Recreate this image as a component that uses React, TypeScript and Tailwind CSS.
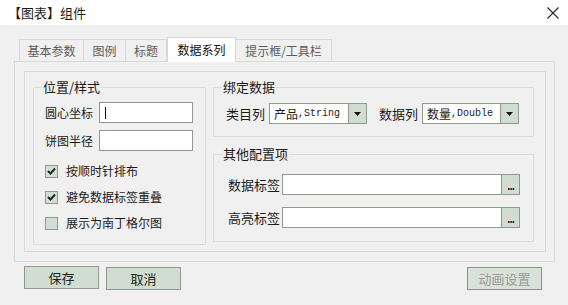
import React from "react";

const cjk = "font-['Noto_Sans_CJK_SC','Noto_Sans',sans-serif]";
const mono = "font-['Liberation_Mono','Noto_Sans_CJK_SC',monospace]";

const tabs = [
  { name: "基本参数", w: "w-[65px]" },
  { name: "图例", w: "w-[42px]" },
  { name: "标题", w: "w-[41px]" },
  { name: "数据系列", w: "w-[69px]", active: true },
  { name: "提示框/工具栏", w: "w-[96px]" },
];

const CheckRow = ({ label, checked }: { label: string; checked: boolean }) => (
  <div className="flex items-center h-[26px]">
    <span className="w-[13px] h-[13px] border border-[#8d9a8d] bg-[#d3ddd3] flex items-center justify-center">
      {checked && (
        <svg width="9" height="8" viewBox="0 0 9 8">
          <path d="M1 4 L3.5 6.5 L8 1.5" stroke="#1e2a1e" strokeWidth="2" fill="none" />
        </svg>
      )}
    </span>
    <span className="ml-[8px] text-[12px] text-[#1a1a1a]">{label}</span>
  </div>
);

// fieldset + legend gives the title sitting on the border, like a Win32 group box
const GroupBox = ({ title, className, inner, children }: { title: string; className: string; inner: string; children: React.ReactNode }) => (
  <fieldset className={`border border-[#dcdcdc] ${className}`}>
    <legend className="ml-[8px] px-[1px] text-[13px] leading-[16px] text-[#1a1a1a]">{title}</legend>
    <div className={inner}>{children}</div>
  </fieldset>
);

const Combo = ({ cn, en, w }: { cn: string; en: string; w: string }) => (
  <div className={`flex h-[21px] border border-[#8d9a8d] bg-white ${w}`}>
    <div className="flex-1 flex items-center pl-[4px] whitespace-nowrap">
      <span className="text-[12px]">{cn}</span>
      <span className={`${mono} text-[10px] text-[#222]`}>,{en}</span>
    </div>
    <div className="w-[18px] border-l border-[#8d9a8d] bg-[#cfdccf] flex items-center justify-center">
      <svg width="7" height="4" viewBox="0 0 7 4">
        <path d="M0 0 H7 L3.5 4 Z" fill="#111" />
      </svg>
    </div>
  </div>
);

const EllipsisInput = () => (
  <div className="flex h-[21px] w-[238px] border border-[#8d9a8d] bg-white">
    <div className="flex-1" />
    <div className="w-[18px] border-l border-[#8d9a8d] bg-[#cfdccf] flex items-end justify-center pb-[5px]">
      <span className="text-[10px] leading-[6px] font-bold tracking-[-1px] text-[#222]">...</span>
    </div>
  </div>
);

const Btn = ({ label, disabled }: { label: string; disabled?: boolean }) => (
  <button
    className={`w-[75px] h-[23px] border text-[13px] ${
      disabled ? "border-[#8a948a] bg-[#d9e2d9] text-[#9a9a9a]" : "border-[#8d9a8d] bg-[#d0ddd0] text-[#1a2a1a]"
    }`}
  >
    {label}
  </button>
);

export default function App() {
  return (
    <div className={`w-[568px] h-[305px] bg-[#f0f0f0] flex flex-col ${cjk} text-[#1a1a1a]`}>
      <div className="h-[25px] bg-white flex items-center justify-between pl-[8px] pr-[9px]">
        <span className="text-[13px]">【图表】组件</span>
        <svg width="12" height="12" viewBox="0 0 12 12">
          <path d="M0.5 0.5 L11.5 11.5 M11.5 0.5 L0.5 11.5" stroke="#222" strokeWidth="1.1" />
        </svg>
      </div>

      <div className="pl-[14px] pt-[11px]">
        <div className="flex items-end pl-[5px] h-[25px]">
          {tabs.map((t) =>
            t.active ? (
              <div
                key={t.name}
                className={`${t.w} h-[25px] bg-white border border-b-0 border-[#d9d9d9] -mb-px relative z-10 flex items-center justify-center text-[12px] text-[#111]`}
              >
                {t.name}
              </div>
            ) : (
              <div
                key={t.name}
                className={`${t.w} h-[22px] border-t border-r border-[#d9d9d9] first:border-l flex items-center justify-center text-[12px] text-[#5c5c5c]`}
              >
                {t.name}
              </div>
            )
          )}
        </div>

        <div className="w-[541px] h-[201px] border border-[#d9d9d9] pl-[9px] pt-[9px]">
          <div className="w-[522px] h-[181px] border border-[#d9d9d9] flex gap-[7px] pl-[8px] pt-[7px]">
            <GroupBox title="位置/样式" className="w-[173px] h-[166px]" inner="pl-[11px]">
              <div className="flex items-center h-[21px] mt-[7px]">
                <span className="text-[12px] w-[54px]">圆心坐标</span>
                <div className="w-[94px] h-[21px] border border-[#8d9a8d] bg-white flex items-center pl-[5px]">
                  <span className="w-px h-[12px] bg-black" />
                </div>
              </div>
              <div className="flex items-center h-[21px] mt-[7px]">
                <span className="text-[12px] w-[54px]">饼图半径</span>
                <div className="w-[94px] h-[21px] border border-[#8d9a8d] bg-white" />
              </div>
              <div className="mt-[7px]">
                <CheckRow label="按顺时针排布" checked />
                <CheckRow label="避免数据标签重叠" checked />
                <CheckRow label="展示为南丁格尔图" checked={false} />
              </div>
            </GroupBox>

            <div className="flex flex-col gap-[9px]">
              <GroupBox title="绑定数据" className="w-[321px] h-[58px]" inner="pl-[12px]">
                <div className="flex items-center mt-[8px]">
                  <span className="text-[13px] w-[43px]">类目列</span>
                  <Combo cn="产品" en="String" w="w-[98px]" />
                  <span className="text-[13px] w-[43px] ml-[12px]">数据列</span>
                  <Combo cn="数量" en="Double" w="w-[97px]" />
                </div>
              </GroupBox>
              <GroupBox title="其他配置项" className="w-[321px] h-[96px]" inner="pl-[14px]">
                <div className="flex items-center mt-[12px]">
                  <span className="text-[13px] w-[54px]">数据标签</span>
                  <EllipsisInput />
                </div>
                <div className="flex items-center mt-[12px]">
                  <span className="text-[13px] w-[54px]">高亮标签</span>
                  <EllipsisInput />
                </div>
              </GroupBox>
            </div>
          </div>
        </div>
      </div>

      <div className="flex items-center pl-[24px] pr-[26px] mt-[3px]">
        <Btn label="保存" />
        <div className="ml-[7px]">
          <Btn label="取消" />
        </div>
        <div className="ml-auto">
          <Btn label="动画设置" disabled />
        </div>
      </div>
    </div>
  );
}
